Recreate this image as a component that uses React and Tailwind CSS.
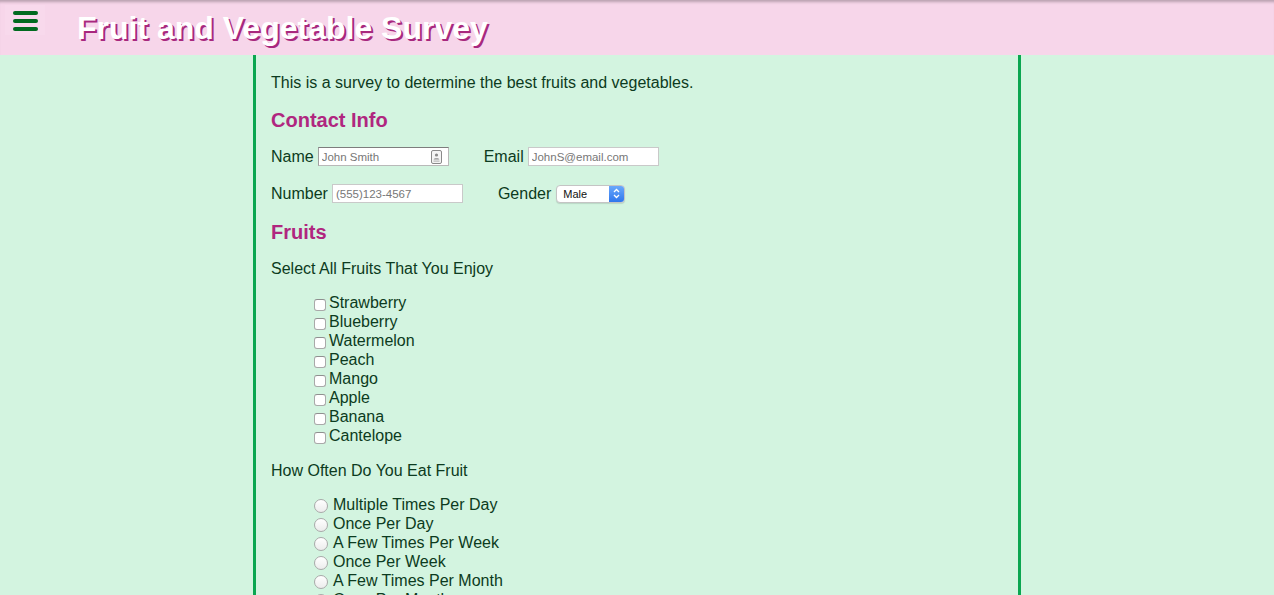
import { useState } from "react";

const fruits = [
  "Strawberry",
  "Blueberry",
  "Watermelon",
  "Peach",
  "Mango",
  "Apple",
  "Banana",
  "Cantelope",
];

const howOften = [
  "Multiple Times Per Day",
  "Once Per Day",
  "A Few Times Per Week",
  "Once Per Week",
  "A Few Times Per Month",
  "Once Per Month",
  "Never",
];

function CardIcon() {
  return (
    <svg width="11" height="14" viewBox="0 0 11 14" className="shrink-0">
      <rect x="0.5" y="0.5" width="10" height="13" rx="1.5" fill="#f4f4f4" stroke="#8a8a8a" />
      <circle cx="5.5" cy="5" r="1.6" fill="#8a8a8a" />
      <path d="M2.6 9.6 C2.9 7.8 8.1 7.8 8.4 9.6 Z" fill="#8a8a8a" />
      <rect x="2.5" y="10.6" width="6" height="1" fill="#b0b0b0" />
    </svg>
  );
}

function TextBox({ placeholder, inset, icon }) {
  return (
    <div
      className={
        "flex items-center w-[131px] h-[19px] bg-white pl-[3px] pr-[6px] border " +
        (inset
          ? "border-[#b9b9b9] border-t-[#7d7d7d] border-l-[#a0a0a0]"
          : "border-[#c9c9c9]")
      }
    >
      <input
        placeholder={placeholder}
        className="flex-1 min-w-0 bg-transparent outline-none pt-[1px] text-[11.5px] text-[#333] placeholder:text-[#777] font-['Liberation_Sans',Arial,sans-serif]"
      />
      {icon && <CardIcon />}
    </div>
  );
}

export default function App() {
  const [gender] = useState("Male");

  return (
    <div className="min-h-screen bg-[#d3f4e0] text-[#0c3b20] font-['Liberation_Sans',Arial,sans-serif]">
      <header className="h-[55px] flex items-center bg-[#f7d6ea] shadow-[inset_0_4px_3px_-2px_rgba(0,0,0,0.25)]">
        <button className="self-start mt-[5px] ml-[5px] w-[40px] h-[30px] flex flex-col items-center pt-[6px] gap-[4px] bg-[#f8d9ec]">
          <span className="block w-[25px] h-[4px] rounded-full bg-[#016a1f]" />
          <span className="block w-[25px] h-[4px] rounded-full bg-[#016a1f]" />
          <span className="block w-[25px] h-[4px] rounded-full bg-[#016a1f]" />
        </button>
        <h1 className="ml-[32px] text-[32px] font-bold text-white [text-shadow:2px_2px_0_#a8287e]">
          Fruit and Vegetable Survey
        </h1>
      </header>

      <main className="w-[768px] mx-auto border-x-[3px] border-[#0aa650] px-[15px] pt-[19px] pb-10 text-[16px]">
        <p className="leading-[18px]">
          This is a survey to determine the best fruits and vegetables.
        </p>

        <h2 className="mt-[17px] text-[20px] leading-[23px] font-bold text-[#b0267f]">
          Contact Info
        </h2>

        <div className="mt-[15px] flex items-center h-[19px] leading-[19px]">
          <div className="flex items-center gap-[4px]">
            <label>Name</label>
            <TextBox placeholder="John Smith" inset icon />
          </div>
          <div className="flex items-center gap-[4px] ml-[35px]">
            <label>Email</label>
            <TextBox placeholder="JohnS@email.com" />
          </div>
        </div>

        <div className="mt-[18px] flex items-center h-[19px] leading-[19px]">
          <div className="flex items-center gap-[4px]">
            <label>Number</label>
            <TextBox placeholder="(555)123-4567" />
          </div>
          <div className="flex items-center gap-[5px] ml-[35px]">
            <label>Gender</label>
            <div className="flex w-[69px] h-[18px] rounded-[4px] bg-white border border-[#c4c4c4] overflow-hidden shadow-[0_1px_1px_rgba(0,0,0,0.12)]">
              <span className="flex-1 pl-[6px] text-[11px] leading-[16px] text-[#111]">
                {gender}
              </span>
              <span className="w-[15px] flex items-center justify-center bg-gradient-to-b from-[#6aa8fb] to-[#2f76ec]">
                <svg width="7" height="11" viewBox="0 0 7 11">
                  <path d="M1 4 L3.5 1.5 L6 4 M1 7 L3.5 9.5 L6 7" fill="none" stroke="white" strokeWidth="1.3" />
                </svg>
              </span>
            </div>
          </div>
        </div>

        <h2 className="mt-[18px] text-[20px] leading-[23px] font-bold text-[#b0267f]">
          Fruits
        </h2>

        <p className="mt-[16px] leading-[18px]">Select All Fruits That You Enjoy</p>

        <ul className="mt-[15px] pl-[43px]">
          {fruits.map((f) => (
            <li key={f} className="flex items-start leading-[19px] h-[19px]">
              <input
                type="checkbox"
                className="appearance-none mt-[6px] w-[12px] h-[12px] rounded-[3px] bg-white border border-[#a9a9a9] border-t-[#8f8f8f] shrink-0"
              />
              <span className="ml-[3px]">{f}</span>
            </li>
          ))}
        </ul>

        <p className="mt-[17px] leading-[18px]">How Often Do You Eat Fruit</p>

        <ul className="mt-[15px] pl-[43px]">
          {howOften.map((o) => (
            <li key={o} className="flex items-start leading-[19px] h-[19px]">
              <input
                type="radio"
                name="often"
                className="appearance-none mt-[4px] w-[14px] h-[14px] rounded-full bg-gradient-to-b from-white to-[#ececec] border border-[#a9a9a9] shrink-0"
              />
              <span className="ml-[5px]">{o}</span>
            </li>
          ))}
        </ul>
      </main>
    </div>
  );
}
